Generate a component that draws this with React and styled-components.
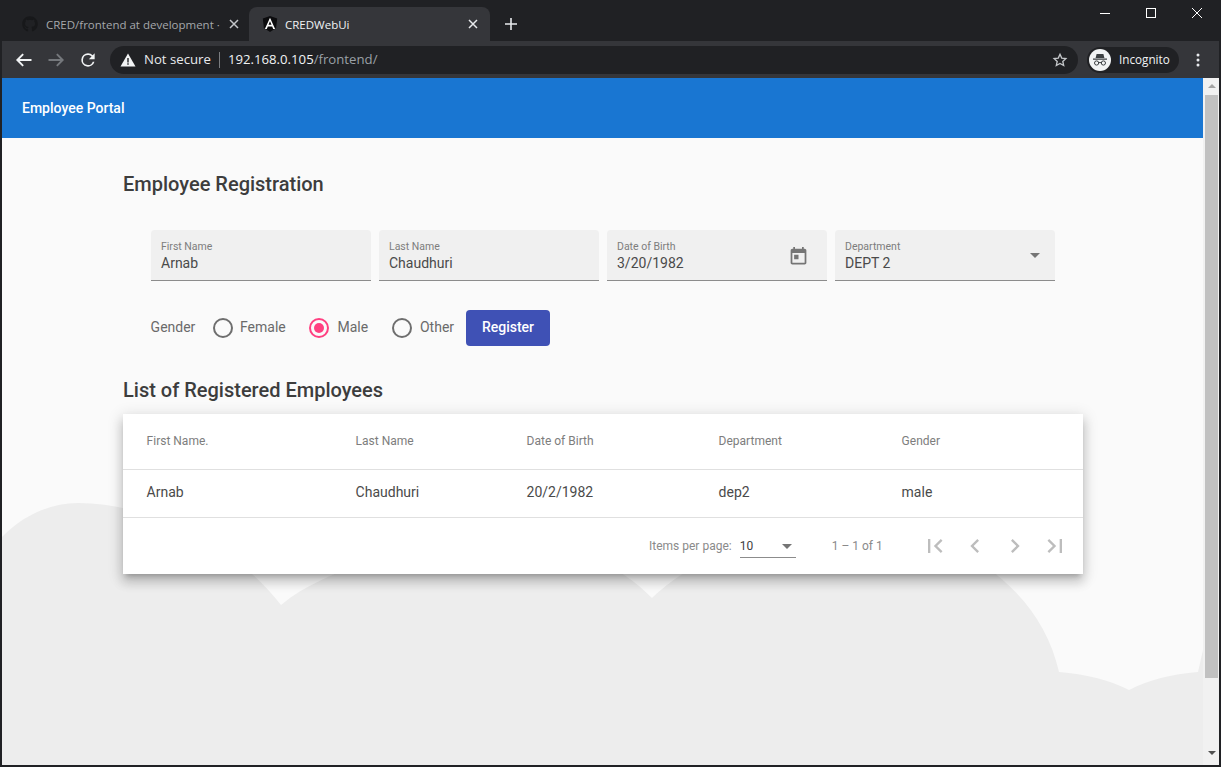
import React from 'react';
import styled, { createGlobalStyle } from 'styled-components';
import { FaGithub } from 'react-icons/fa';

const GlobalStyle = createGlobalStyle`
  html, body {
    margin: 0;
    padding: 0;
    height: 100%;
    overflow: hidden;
    background: #202124;
  }
  * {
    box-sizing: border-box;
  }
`;

const Window = styled.div`
  width: 1221px;
  height: 767px;
  display: flex;
  flex-direction: column;
  background: #202124;
  padding: 0 2px 2px 2px;
  font-family: Roboto, sans-serif;
`;

const TabStrip = styled.div`
  height: 41px;
  display: flex;
  align-items: flex-end;
  padding-left: 6px;
  position: relative;
`;

const Tab = styled.div`
  width: 241px;
  height: 34px;
  display: flex;
  align-items: center;
  padding: 0 ${(p) => (p.$active ? '9px' : '7px')} 0 ${(p) => (p.$active ? '13px' : '14px')};
  border-radius: 8px 8px 0 0;
  background: ${(p) => (p.$active ? '#35363a' : 'transparent')};
  color: ${(p) => (p.$active ? '#f1f3f4' : '#a5a8ab')};
  font-family: "Open Sans", sans-serif;
  font-size: 11.5px;
`;

const TabTitle = styled.span`
  flex: 1;
  margin-left: ${(p) => (p.$active ? '7px' : '8px')};
  white-space: nowrap;
`;

const NewTab = styled.svg`
  width: 12px;
  height: 12px;
  margin: 0 0 11px 15px;
`;

const WindowControls = styled.div`
  position: absolute;
  top: 0;
  right: -1px;
  display: flex;
`;

const ControlButton = styled.div`
  width: 46px;
  height: 26px;
  display: flex;
  align-items: center;
  justify-content: center;
`;

const Toolbar = styled.div`
  height: 37px;
  background: #35363a;
  display: flex;
  align-items: center;
  padding: 0 13px 0 12px;
`;

const NavIcon = styled.svg`
  width: 20px;
  height: 20px;
  margin-right: 12px;
  flex: none;
`;

const Omnibox = styled.div`
  flex: 1;
  height: 28px;
  border-radius: 14px;
  background: #202124;
  display: flex;
  align-items: center;
  padding: 0 10px 0 10px;
  font-family: "Open Sans", sans-serif;
  font-size: 13.2px;
`;

const NotSecure = styled.span`
  color: #e8eaed;
  margin: 0 0 2px 8px;
  white-space: nowrap;
`;

const Divider = styled.span`
  width: 1px;
  height: 16px;
  background: #7a7c7f;
  margin: 0 8px 0 8px;
`;

const Host = styled.span`
  color: #f1f3f4;
  margin-bottom: 2px;
`;

const UrlPath = styled.span`
  flex: 1;
  color: #9aa0a6;
  margin-bottom: 2px;
`;

const Profile = styled.div`
  width: 92px;
  height: 26px;
  margin-left: 9px;
  border-radius: 13px;
  background: #202124;
  display: flex;
  align-items: center;
  padding-left: 2px;
  color: #f1f3f4;
  font-family: "Open Sans", sans-serif;
  font-size: 11.7px;
`;

const ProfileName = styled.span`
  margin: 0 0 2px 8px;
`;

const MenuIcon = styled.svg`
  width: 16px;
  height: 16px;
  margin-left: 11px;
`;

const Viewport = styled.div`
  flex: 1;
  display: flex;
  min-height: 0;
`;

const Page = styled.main`
  flex: 1;
  position: relative;
  background: #fafafa;
  color: rgba(0, 0, 0, 0.87);
  overflow: hidden;
`;

const Cloud = styled.svg`
  position: absolute;
  left: 0;
  top: 0;
`;

const AppBar = styled.header`
  position: relative;
  height: 60px;
  background: #1976d2;
  color: #fff;
  display: flex;
  align-items: center;
  padding-left: 20px;
  font-size: 14px;
  font-weight: 500;
`;

const Content = styled.div`
  position: relative;
  width: 960px;
  margin-left: 121px;
`;

const Heading = styled.h2`
  margin: 0;
  font-size: 20px;
  line-height: 28px;
  font-weight: 500;
  color: #3d3d3d;
`;

const FormHeading = styled(Heading)`
  margin-top: 32px;
`;

const FieldRow = styled.div`
  display: flex;
  gap: 8px;
  margin: 32px 0 0 28px;
`;

const Field = styled.div`
  position: relative;
  width: 220px;
  height: 51px;
  padding: 10px 10px 0;
  background: #f0f0f0;
  border-radius: 4px 4px 0 0;
  border-bottom: 1px solid #8c8c8c;
`;

const FieldLabel = styled.div`
  font-size: 10.5px;
  line-height: 13px;
  color: #7d7d7d;
`;

const FieldValue = styled.div`
  margin-top: 1px;
  font-size: 14px;
  line-height: 19px;
  color: #4a4a4a;
`;

const FieldIcon = styled.svg`
  position: absolute;
  right: 18px;
  top: 16px;
  width: 21px;
  height: 21px;
  fill: #757575;
`;

const SelectArrow = styled.span`
  position: absolute;
  right: 15px;
  top: 23px;
  border-left: 5px solid transparent;
  border-right: 5px solid transparent;
  border-top: 5px solid #757575;
`;

const GenderRow = styled.div`
  display: flex;
  align-items: center;
  height: 36px;
  margin: 29px 0 0 27.6px;
  font-size: 14px;
  color: #6a6a6a;
`;

const GenderLabel = styled.span`
  width: 62.4px;
  margin-bottom: 2px;
`;

const RadioOption = styled.label`
  width: ${(p) => p.$width}px;
  display: flex;
  align-items: center;
  gap: ${(p) => p.$gap}px;
`;

const RadioText = styled.span`
  margin-bottom: 2px;
`;

const RadioCircle = styled.span`
  position: relative;
  width: 20px;
  height: 20px;
  border-radius: 50%;
  border: 2px solid ${(p) => (p.$checked ? '#ff4081' : '#6e6e6e')};

  &::after {
    content: '';
    display: ${(p) => (p.$checked ? 'block' : 'none')};
    position: absolute;
    inset: 3px;
    border-radius: 50%;
    background: #ff4081;
  }
`;

const RegisterButton = styled.button`
  width: 84px;
  height: 36px;
  border: 0;
  border-radius: 4px;
  padding: 0 0 2px;
  background: #3f51b5;
  color: #fff;
  font-family: Roboto, sans-serif;
  font-size: 14px;
  font-weight: 500;
`;

const ListHeading = styled(Heading)`
  margin-top: 30px;
`;

const Card = styled.section`
  margin-top: 10px;
  background: #fff;
  box-shadow: 0 5px 5px -3px rgba(0, 0, 0, 0.2), 0 8px 10px 1px rgba(0, 0, 0, 0.14), 0 3px 14px 2px rgba(0, 0, 0, 0.12);
`;

const TableRow = styled.div`
  display: grid;
  grid-template-columns: 209px 171px 192px 183px 1fr;
  align-items: center;
  height: ${(p) => (p.$head ? '56px' : '48px')};
  padding: 0 0 ${(p) => (p.$head ? '2px' : '4px')} 23.6px;
  border-bottom: 1px solid #e0e0e0;
  font-size: ${(p) => (p.$head ? '12px' : '14px')};
  color: ${(p) => (p.$head ? '#7d7d7d' : '#4a4a4a')};
`;

const Paginator = styled.div`
  height: 56px;
  display: flex;
  align-items: center;
  padding-left: 526px;
  font-size: 12px;
  color: #8a8a8a;
`;

const PageSize = styled.div`
  position: relative;
  width: 56px;
  height: 24px;
  margin-left: 8px;
  padding-top: 5px;
  color: #424242;
  border-bottom: 1px solid #8c8c8c;
`;

const PageSizeArrow = styled.span`
  position: absolute;
  right: 4px;
  top: 10px;
  border-left: 5px solid transparent;
  border-right: 5px solid transparent;
  border-top: 5px solid #757575;
`;

const RangeLabel = styled.span`
  margin-left: 36px;
  width: 89px;
`;

const PagerIcon = styled.svg`
  width: 28px;
  height: 28px;
  margin-right: 12px;
  fill: #bdbdbd;
`;

const Scrollbar = styled.div`
  width: 16px;
  background: #f1f1f1;
  display: flex;
  flex-direction: column;
  align-items: center;
  padding: 6px 1px 0 2px;
`;

const ScrollArrow = styled.span`
  border-left: 4px solid transparent;
  border-right: 4px solid transparent;
  ${(p) => (p.$down ? 'border-top: 4px solid #505050;' : 'border-bottom: 4px solid #a3a3a3;')}
`;

const ScrollThumb = styled.div`
  width: 100%;
  height: 583px;
  margin: 7px 0 73px;
  background: #c1c1c1;
`;

const BackIcon = () => (
  <NavIcon viewBox="0 0 24 24" fill="none" stroke="#f1f3f4" strokeWidth="2.3">
    <path d="M21 12H4M11 5l-7 7 7 7" />
  </NavIcon>
);

const ForwardIcon = () => (
  <NavIcon viewBox="0 0 24 24" fill="none" stroke="#75787c" strokeWidth="2.3">
    <path d="M3 12h17M13 5l7 7-7 7" />
  </NavIcon>
);

const ReloadIcon = () => (
  <NavIcon viewBox="0 0 24 24" fill="#f1f3f4">
    <path d="M17.65 6.35A7.96 7.96 0 0 0 12 4a8 8 0 1 0 7.73 10h-2.08A6 6 0 1 1 12 6c1.66 0 3.14.69 4.22 1.78L13 11h7V4z" />
  </NavIcon>
);

const AngularIcon = () => (
  <svg width="16" height="16" viewBox="0 0 16 16">
    <path d="M8 0 .8 2.5 1.9 12 8 16l6.1-4 1.1-9.5z" fill="#0c0c0e" />
    <path d="M8 1.8 2.9 13h1.9l1-2.5h4.4l1 2.5h1.9zM6.5 8.8 8 5.2l1.5 3.6z" fill="#fff" />
  </svg>
);

const CloseGlyph = ({ color = '#c4c7ca' }) => (
  <svg width="16" height="16" viewBox="0 0 16 16" stroke={color} strokeWidth="1.5">
    <path d="M4 4l8 8M12 4l-8 8" />
  </svg>
);

const IncognitoBadge = () => (
  <svg width="22" height="22" viewBox="0 0 22 22">
    <circle cx="11" cy="11" r="11" fill="#f1f3f4" />
    <path d="M7.6 5h6.8l1 4H6.6zM4 9.6h14v1.1H4z" fill="#3c4043" />
    <circle cx="7.6" cy="14" r="2.1" fill="none" stroke="#3c4043" strokeWidth="1" />
    <circle cx="14.4" cy="14" r="2.1" fill="none" stroke="#3c4043" strokeWidth="1" />
    <path d="M9.7 13.6h2.6" stroke="#3c4043" strokeWidth="1" />
  </svg>
);

const Browser = () => (
  <>
    <TabStrip>
      <Tab>
        <FaGithub size={16} color="#17181a" />
        <TabTitle>CRED/frontend at development ·</TabTitle>
        <CloseGlyph />
      </Tab>
      <Tab $active>
        <AngularIcon />
        <TabTitle $active>CREDWebUi</TabTitle>
        <CloseGlyph color="#e8eaed" />
      </Tab>
      <NewTab viewBox="0 0 12 12" stroke="#e8eaed" strokeWidth="1.6">
        <path d="M6 0v12M0 6h12" />
      </NewTab>
      <WindowControls>
        <ControlButton>
          <svg width="12" height="12" viewBox="0 0 12 12" stroke="#fff">
            <path d="M1 6.5h10" />
          </svg>
        </ControlButton>
        <ControlButton>
          <svg width="12" height="12" viewBox="0 0 12 12" fill="none" stroke="#fff">
            <rect x="1.5" y="1.5" width="9" height="9" />
          </svg>
        </ControlButton>
        <ControlButton>
          <svg width="12" height="12" viewBox="0 0 12 12" stroke="#fff">
            <path d="M1 1l10 10M11 1L1 11" />
          </svg>
        </ControlButton>
      </WindowControls>
    </TabStrip>
    <Toolbar>
      <BackIcon />
      <ForwardIcon />
      <ReloadIcon />
      <Omnibox>
        <svg width="16" height="16" viewBox="0 0 16 16">
          <path d="M8 1.5 15.5 14.5H.5z" fill="#f1f3f4" />
          <path d="M7.3 6h1.4v4.5H7.3zM7.3 11.3h1.4v1.4H7.3z" fill="#202124" />
        </svg>
        <NotSecure>Not secure</NotSecure>
        <Divider />
        <Host>192.168.0.105</Host>
        <UrlPath>/frontend/</UrlPath>
        <svg width="16" height="16" viewBox="0 0 24 24" fill="none" stroke="#c4c7ca" strokeWidth="2">
          <path d="M12 3.5l2.6 5.7 6.2.7-4.6 4.2 1.3 6.1L12 17.1l-5.5 3.1 1.3-6.1-4.6-4.2 6.2-.7z" />
        </svg>
      </Omnibox>
      <Profile>
        <IncognitoBadge />
        <ProfileName>Incognito</ProfileName>
      </Profile>
      <MenuIcon viewBox="0 0 16 16" fill="#e8eaed">
        <circle cx="8" cy="3" r="1.5" />
        <circle cx="8" cy="8" r="1.5" />
        <circle cx="8" cy="13" r="1.5" />
      </MenuIcon>
    </Toolbar>
  </>
);

const CloudBackground = () => (
  <Cloud width="1201" height="687" viewBox="2 78 1201 687">
    <path
      fill="#ededed"
      d="M2 537 C22 516 50 503 78 503 C150 503 235 545 281 605 C305 585 335 573 370 560 C420 540 450 535 480 535 C555 535 615 560 652 598 C690 562 760 525 850 525 C950 525 1040 585 1059 672 C1085 674 1110 680 1129 690 C1148 680 1172 674 1198 672 L1203 650 V765 H2 Z"
    />
  </Cloud>
);

const fields = [
  { label: 'First Name', value: 'Arnab' },
  { label: 'Last Name', value: 'Chaudhuri' },
  { label: 'Date of Birth', value: '3/20/1982', calendar: true },
  { label: 'Department', value: 'DEPT 2', select: true },
];

const genders = [
  { label: 'Female', width: 96, gap: 7 },
  { label: 'Male', width: 83, gap: 8.5, checked: true },
  { label: 'Other', width: 74, gap: 8 },
];

const columns = ['First Name.', 'Last Name', 'Date of Birth', 'Department', 'Gender'];
const employee = ['Arnab', 'Chaudhuri', '20/2/1982', 'dep2', 'male'];

const pagerPaths = [
  'M18.41 16.59L13.82 12l4.59-4.59L17 6l-6 6 6 6zM6 6h2v12H6z',
  'M15.41 7.41L14 6l-6 6 6 6 1.41-1.41L10.83 12z',
  'M10 6L8.59 7.41 13.17 12l-4.58 4.59L10 18l6-6z',
  'M5.59 7.41L10.18 12l-4.59 4.59L7 18l6-6-6-6zM16 6h2v12h-2z',
];

export default function App() {
  return (
    <Window>
      <GlobalStyle />
      <Browser />
      <Viewport>
        <Page>
          <CloudBackground />
          <AppBar>Employee Portal</AppBar>
          <Content>
            <FormHeading>Employee Registration</FormHeading>
            <FieldRow>
              {fields.map((field) => (
                <Field key={field.label}>
                  <FieldLabel>{field.label}</FieldLabel>
                  <FieldValue>{field.value}</FieldValue>
                  {field.calendar && (
                    <FieldIcon viewBox="0 0 24 24">
                      <path d="M19 3h-1V1h-2v2H8V1H6v2H5c-1.11 0-1.99.9-1.99 2L3 19c0 1.1.89 2 2 2h14c1.1 0 2-.9 2-2V5c0-1.1-.9-2-2-2zm0 16H5V8h14v11zM7 10h5v5H7z" />
                    </FieldIcon>
                  )}
                  {field.select && <SelectArrow />}
                </Field>
              ))}
            </FieldRow>
            <GenderRow>
              <GenderLabel>Gender</GenderLabel>
              {genders.map((gender) => (
                <RadioOption key={gender.label} $width={gender.width} $gap={gender.gap}>
                  <RadioCircle $checked={gender.checked} />
                  <RadioText>{gender.label}</RadioText>
                </RadioOption>
              ))}
              <RegisterButton>Register</RegisterButton>
            </GenderRow>
            <ListHeading>List of Registered Employees</ListHeading>
            <Card>
              <TableRow $head>
                {columns.map((column) => (
                  <span key={column}>{column}</span>
                ))}
              </TableRow>
              <TableRow>
                {employee.map((cell) => (
                  <span key={cell}>{cell}</span>
                ))}
              </TableRow>
              <Paginator>
                Items per page:
                <PageSize>
                  10
                  <PageSizeArrow />
                </PageSize>
                <RangeLabel>1 – 1 of 1</RangeLabel>
                {pagerPaths.map((d) => (
                  <PagerIcon key={d} viewBox="0 0 24 24">
                    <path d={d} />
                  </PagerIcon>
                ))}
              </Paginator>
            </Card>
          </Content>
        </Page>
        <Scrollbar>
          <ScrollArrow />
          <ScrollThumb />
          <ScrollArrow $down />
        </Scrollbar>
      </Viewport>
    </Window>
  );
}
